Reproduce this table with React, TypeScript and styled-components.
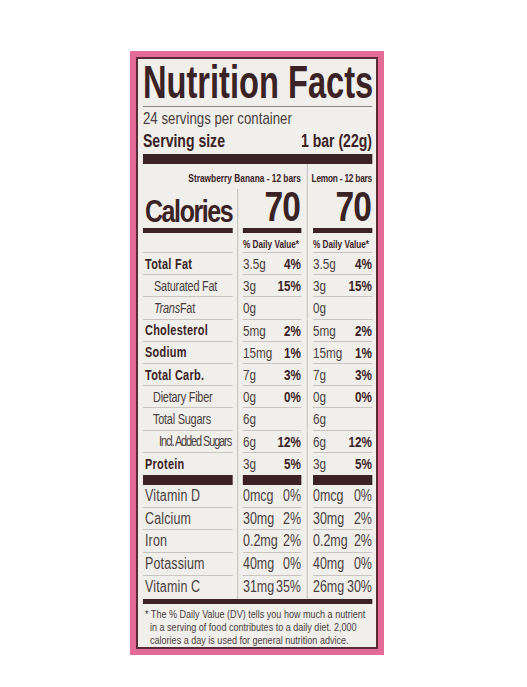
import React from 'react';
import styled, { createGlobalStyle } from 'styled-components';

// the label font is a condensed grotesk; Liberation Sans squeezed horizontally stands in for it
const SQUEEZE = 0.78;
const u = (px: number) => px / SQUEEZE;

const ink = '#3a2225';
const soft = '#4a3e40';
const rule = '#c9c4bf';

const GlobalStyle = createGlobalStyle`
  body {
    margin: 0;
    background: #ffffff;
    font-family: "Liberation Sans", Arial, sans-serif;
    color: ${ink};
  }
`;

const Page = styled.div`
  padding: 51px 0 0 130px;
`;

const Frame = styled.div`
  width: 254px;
  height: 604px;
  box-sizing: border-box;
  border: 6px solid #e36c97;
`;

const Panel = styled.div`
  height: 100%;
  box-sizing: border-box;
  border: 2px solid #5b2a37;
  background: #f1efeb;
  padding: 0 5px;
`;

const Sheet = styled.div`
  width: ${u(229)}px;
  transform: scaleX(${SQUEEZE});
  transform-origin: left top;
`;

const TitleRow = styled.div`
  height: 48px;
  display: flex;
  align-items: flex-end;
  border-bottom: 1px solid #8f8684;
  padding-bottom: 1px;
  box-sizing: border-box;
`;

const Title = styled.h1`
  margin: 0;
  font-size: 47px;
  line-height: 1;
  font-weight: 700;
  white-space: nowrap;
  transform: scaleX(0.89);
  transform-origin: left bottom;
`;

const Servings = styled.div`
  height: 22px;
  display: flex;
  align-items: flex-end;
  font-size: 17px;
  line-height: 1;
  padding-bottom: 2px;
  box-sizing: border-box;
  color: ${soft};
`;

const ServingSize = styled.div`
  height: 23px;
  display: flex;
  align-items: flex-end;
  justify-content: space-between;
  font-size: 18px;
  line-height: 1;
  padding-bottom: 2px;
  box-sizing: border-box;
  font-weight: 700;
`;

const TopBar = styled.div`
  height: 10px;
  margin-top: 2px;
  background: ${ink};
`;

const Grid = styled.div`
  display: grid;
  grid-template-columns: ${u(90)}px ${u(10)}px ${u(58)}px ${u(12)}px ${u(59)}px;
`;

const Gap = styled.div`
  background: linear-gradient(#b3ada8, #b3ada8) center / 1.3px 100% no-repeat;
`;

const Head = styled.div<{ $wide?: boolean; $spacing: number }>`
  grid-column: ${p => (p.$wide ? '1 / 4' : 'auto')};
  height: 25px;
  display: flex;
  align-items: center;
  justify-content: flex-end;
  font-size: 10.7px;
  font-weight: 700;
  letter-spacing: ${p => p.$spacing}px;
  white-space: nowrap;
  padding-top: 3px;
  box-sizing: border-box;
`;

const CalLabel = styled.div`
  height: 39px;
  display: flex;
  align-items: flex-end;
  font-size: 32px;
  font-weight: 700;
  letter-spacing: -1.8px;
  line-height: 1;
  padding: 0 0 1px ${u(2)}px;
  box-sizing: border-box;
`;

const CalValue = styled.div`
  height: 39px;
  display: flex;
  align-items: flex-end;
  justify-content: flex-end;
  font-size: 43px;
  font-weight: 700;
  letter-spacing: -1.2px;
  line-height: 1;
  padding-right: 1.2px;
  box-sizing: border-box;
`;

const Bar = styled.div<{ $h: number; $full?: boolean }>`
  height: ${p => p.$h}px;
  background: ${ink};
  grid-column: ${p => (p.$full ? '1 / -1' : 'auto')};
`;

const DvCell = styled.div`
  height: 20px;
  box-sizing: border-box;
  border-bottom: 1px solid ${rule};
  display: flex;
  align-items: center;
  padding-top: 2px;
  font-size: 10.5px;
  font-weight: 700;
  white-space: nowrap;
`;

const Cell = styled.div<{ $big?: boolean; $last?: boolean }>`
  height: ${p => (p.$big ? 22.8 : 22.2)}px;
  box-sizing: border-box;
  border-bottom: ${p => (p.$last ? 'none' : `1px solid ${rule}`)};
  display: flex;
  align-items: center;
  white-space: nowrap;
  font-size: ${p => (p.$big ? 16 : 15)}px;
  color: ${soft};
`;

const Label = styled(Cell)<{ $indent: number; $bold?: boolean; $tight?: boolean }>`
  padding-left: ${p => u(2 + p.$indent)}px;
  font-size: ${p => (p.$big ? 16 : 14)}px;
  font-weight: ${p => (p.$bold ? 700 : 400)};
  color: ${p => (p.$bold ? ink : soft)};
  letter-spacing: ${p => (p.$tight ? '-1.4px' : p.$bold ? '0.35px' : p.$big ? '0.2px' : '-0.3px')};
`;

const Value = styled(Cell)`
  justify-content: space-between;
`;

const Pct = styled.span<{ $bold?: boolean }>`
  font-weight: ${p => (p.$bold ? 700 : 400)};
  color: ${p => (p.$bold ? ink : soft)};
`;

const Note = styled.p`
  margin: 0;
  padding: 3px 0 0 ${u(7)}px;
  text-indent: ${u(-5)}px;
  font-size: 11.6px;
  line-height: 13.2px;
  white-space: nowrap;
  color: ${soft};
`;

type Amount = [string, string];

type Nutrient = {
  name: React.ReactNode;
  indent: number;
  bold?: boolean;
  tight?: boolean;
  a: Amount;
  b: Amount;
};

const nutrients: Nutrient[] = [
  { name: 'Total Fat', indent: 0, bold: true, a: ['3.5g', '4%'], b: ['3.5g', '4%'] },
  { name: 'Saturated Fat', indent: 9, a: ['3g', '15%'], b: ['3g', '15%'] },
  { name: <><i>Trans</i> Fat</>, indent: 9, a: ['0g', ''], b: ['0g', ''] },
  { name: 'Cholesterol', indent: 0, bold: true, a: ['5mg', '2%'], b: ['5mg', '2%'] },
  { name: 'Sodium', indent: 0, bold: true, a: ['15mg', '1%'], b: ['15mg', '1%'] },
  { name: 'Total Carb.', indent: 0, bold: true, a: ['7g', '3%'], b: ['7g', '3%'] },
  { name: 'Dietary Fiber', indent: 8, a: ['0g', '0%'], b: ['0g', '0%'] },
  { name: 'Total Sugars', indent: 8, a: ['6g', ''], b: ['6g', ''] },
  { name: 'Incl. Added Sugars', indent: 14, tight: true, a: ['6g', '12%'], b: ['6g', '12%'] },
  { name: 'Protein', indent: 0, bold: true, a: ['3g', '5%'], b: ['3g', '5%'] },
];

const vitamins: { name: string; a: Amount; b: Amount }[] = [
  { name: 'Vitamin D', a: ['0mcg', '0%'], b: ['0mcg', '0%'] },
  { name: 'Calcium', a: ['30mg', '2%'], b: ['30mg', '2%'] },
  { name: 'Iron', a: ['0.2mg', '2%'], b: ['0.2mg', '2%'] },
  { name: 'Potassium', a: ['40mg', '0%'], b: ['40mg', '0%'] },
  { name: 'Vitamin C', a: ['31mg', '35%'], b: ['26mg', '30%'] },
];

function SegmentBar({ h }: { h: number }) {
  return (
    <>
      <Bar $h={h} />
      <Gap />
      <Bar $h={h} />
      <Gap />
      <Bar $h={h} />
    </>
  );
}

export default function App() {
  const lastN = nutrients.length - 1;
  const lastV = vitamins.length - 1;

  return (
    <Page>
      <GlobalStyle />
      <Frame>
        <Panel>
          <Sheet>
            <TitleRow>
              <Title>Nutrition Facts</Title>
            </TitleRow>
            <Servings>24 servings per container</Servings>
            <ServingSize>
              <span>Serving size</span>
              <span>1 bar (22g)</span>
            </ServingSize>
            <TopBar />

            <Grid>
              <Head $wide $spacing={0}>Strawberry Banana - 12 bars</Head>
              <Gap />
              <Head $spacing={-0.3}>Lemon - 12 bars</Head>

              <CalLabel>Calories</CalLabel>
              <Gap />
              <CalValue>70</CalValue>
              <Gap />
              <CalValue>70</CalValue>

              <SegmentBar h={5} />

              <DvCell />
              <Gap />
              <DvCell>% Daily Value*</DvCell>
              <Gap />
              <DvCell>% Daily Value*</DvCell>

              {nutrients.map((n, i) => (
                <React.Fragment key={i}>
                  <Label $indent={n.indent} $bold={n.bold} $tight={n.tight} $last={i === lastN}>
                    {n.name}
                  </Label>
                  <Gap />
                  <Value $last={i === lastN}>
                    <span>{n.a[0]}</span>
                    <Pct $bold>{n.a[1]}</Pct>
                  </Value>
                  <Gap />
                  <Value $last={i === lastN}>
                    <span>{n.b[0]}</span>
                    <Pct $bold>{n.b[1]}</Pct>
                  </Value>
                </React.Fragment>
              ))}

              <SegmentBar h={10} />

              {vitamins.map((v, i) => (
                <React.Fragment key={v.name}>
                  <Label $big $indent={0} $last={i === lastV}>
                    {v.name}
                  </Label>
                  <Gap />
                  <Value $big $last={i === lastV}>
                    <span>{v.a[0]}</span>
                    <Pct>{v.a[1]}</Pct>
                  </Value>
                  <Gap />
                  <Value $big $last={i === lastV}>
                    <span>{v.b[0]}</span>
                    <Pct>{v.b[1]}</Pct>
                  </Value>
                </React.Fragment>
              ))}

              <Bar $h={5} $full />
            </Grid>

            <Note>
              * The % Daily Value (DV) tells you how much a nutrient
              <br />
              in a serving of food contributes to a daily diet. 2,000
              <br />
              calories a day is used for general nutrition advice.
            </Note>
          </Sheet>
        </Panel>
      </Frame>
    </Page>
  );
}
